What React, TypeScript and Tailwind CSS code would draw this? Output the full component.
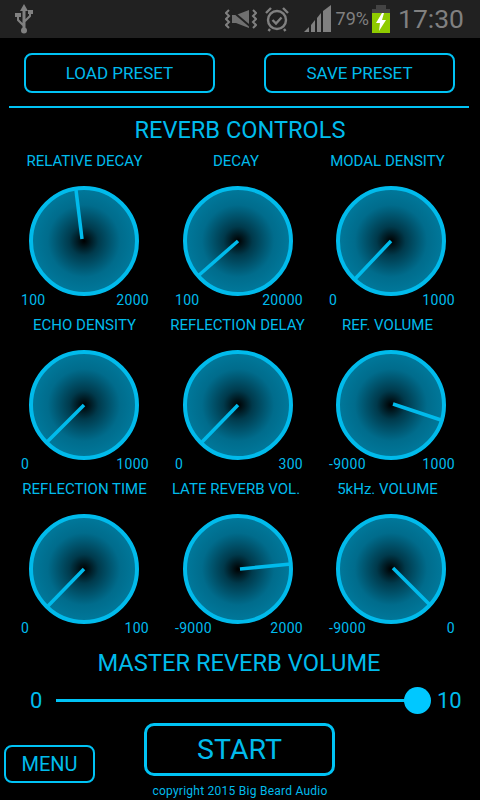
import React from "react";

const knobs = [
  { label: "RELATIVE DECAY", min: "100", max: "2000", x1: 53, y1: 53, x2: 47, y2: 4, shift: "ml-[1px]" },
  { label: "DECAY", min: "100", max: "20000", x1: 55, y1: 55, x2: 15, y2: 90, shift: "mr-[4px]" },
  { label: "MODAL DENSITY", min: "0", max: "1000", x1: 55, y1: 55, x2: 19, y2: 93, shift: "mr-[7px]" },
  { label: "ECHO DENSITY", min: "0", max: "1000", x1: 55, y1: 55, x2: 18, y2: 92, shift: "ml-[1px]" },
  { label: "REFLECTION DELAY", min: "0", max: "300", x1: 55, y1: 55, x2: 19, y2: 92, shift: "mr-[1px]" },
  { label: "REF. VOLUME", min: "-9000", max: "1000", x1: 57, y1: 54, x2: 105, y2: 70, shift: "mr-[7px]" },
  { label: "REFLECTION TIME", min: "0", max: "100", x1: 55, y1: 55, x2: 19, y2: 92, shift: "ml-[1px]" },
  { label: "LATE REVERB VOL.", min: "-9000", max: "2000", x1: 57, y1: 55, x2: 108, y2: 50, shift: "mr-[4px]" },
  { label: "5kHz. VOLUME", min: "-9000", max: "0", x1: 57, y1: 54, x2: 93, y2: 90, shift: "mr-[7px]" },
];

function Knob(k: (typeof knobs)[number]) {
  return (
    <div className="flex flex-col items-center h-[164px]">
      <div className={`h-[20px] leading-[22px] text-[15px] whitespace-nowrap ${k.shift}`}>{k.label}</div>
      <div className="relative w-[110px] h-[110px] mt-[16px] rounded-full border-[4px] border-[#00bbec] bg-[radial-gradient(circle,#000_0%,#003a4c_20%,#006c8c_50%,#007fa3_85%)]">
        <svg className="absolute -left-[4px] -top-[4px]" width="110" height="110" viewBox="0 0 110 110">
          <line x1={k.x1} y1={k.y1} x2={k.x2} y2={k.y2} stroke="#00bbec" strokeWidth="3.5" />
        </svg>
      </div>
      <div className="w-full pl-[14px] pr-[12px] -mt-[5px] h-[18px] leading-[18px] text-[14px] tracking-[0.3px] flex justify-between">
        <span>{k.min}</span>
        <span>{k.max}</span>
      </div>
    </div>
  );
}

function StatusBar() {
  return (
    <div className="h-[38px] bg-[#212121] flex items-center text-[#808080] shrink-0">
      <svg className="ml-[15px]" width="20" height="30" viewBox="0 0 20 30" fill="#808080">
        <path d="M9 0 L5 7 H7.5 V19 L4 15.5 V13 H6 V9 H0 V13 H2 V16.5 L7.5 22 V25 H10.5 V18 L16 12.5 V10 H18 V6 H13 V10 H14 V11.5 L10.5 15 V7 H13 Z" />
        <circle cx="9" cy="26.5" r="3" />
      </svg>
      <div className="ml-auto flex items-center">
        <svg width="32" height="24" viewBox="0 0 32 24" fill="none" stroke="#808080" strokeWidth="2">
          <path d="M4 3 L1 6 L4 9 L1 12 L4 15 L1 18 L4 21" />
          <path d="M28 3 L31 6 L28 9 L31 12 L28 15 L31 18 L28 21" />
          <path d="M7 8 H11 L24 3 V21 L11 16 H7 Z" fill="#707070" stroke="none" />
          <path d="M6 3 L26 20" stroke="#212121" strokeWidth="2" />
        </svg>
        <svg className="ml-[7px]" width="26" height="26" viewBox="0 0 26 26" fill="none" stroke="#808080" strokeWidth="2.4">
          <circle cx="13" cy="14" r="9" />
          <path d="M8.5 14 L12 17.5 L17.5 11.5" />
          <path d="M2 7 L7 2 M19 2 L24 7 M6 23 L4.5 25 M20 23 L21.5 25" />
        </svg>
        <svg className="ml-[14px]" width="29" height="28" viewBox="0 0 29 28" fill="#808080">
          <path d="M0 27 L5 22 V27 Z" />
          <path d="M7 20 L11 15 V27 H7 Z" />
          <path d="M13 13 L17 8 V27 H13 Z" />
          <path d="M19 6 L27 0 V27 H19 Z" />
        </svg>
        <span className="ml-[3px] text-[18px] leading-none">79%</span>
        <div className="ml-[3px] w-[18px] h-[28px] relative flex flex-col items-center">
          <div className="w-[10px] h-[4px] bg-[#444444]" />
          <div className="w-[18px] h-[4px] bg-[#444444]" />
          <div className="w-[18px] h-[20px] bg-[#8fcb00]" />
          <svg className="absolute left-[3px] top-[8px]" width="12" height="18" viewBox="0 0 12 18" fill="#ffffff">
            <path d="M7 0 L1 10 H5 L4 18 L11 7 H7 L9 0 Z" />
          </svg>
        </div>
        <span className="ml-[8px] mr-[16px] text-[26.5px] leading-none">17:30</span>
      </div>
    </div>
  );
}

export default function App() {
  return (
    <div className="w-[480px] h-[800px] overflow-hidden bg-black flex flex-col text-[#00bbec] font-['Roboto',sans-serif]">
      <StatusBar />
      <div className="flex justify-between px-[24px] mr-[1px] mt-[15px]">
        <button className="w-[191px] h-[40px] pt-[1px] border-2 border-[#00c3f5] rounded-[8px] text-[17px]">LOAD PRESET</button>
        <button className="w-[191px] h-[40px] pt-[1px] border-2 border-[#00c3f5] rounded-[8px] text-[17px]">SAVE PRESET</button>
      </div>
      <div className="h-[2px] bg-[#00c3f5] ml-[9px] mr-[11px] mt-[13px]" />
      <div className="text-center text-[23.6px] leading-[30px] mt-[7px]">REVERB CONTROLS</div>
      <div className="grid grid-cols-[154px_154px_152px] px-[7px] mt-[5px]">
        {knobs.map((k) => (
          <Knob key={k.label} {...k} />
        ))}
      </div>
      <div className="text-center text-[23.7px] leading-[30px] mt-[6px] mr-[2px]">MASTER REVERB VOLUME</div>
      <div className="flex items-center h-[30px] mt-[7px] text-[22px]">
        <span className="w-[56px] pl-[30px]">0</span>
        <div className="relative w-[362px] h-[3px] bg-[#00c3f5]">
          <div className="absolute right-[-13px] -top-[12px] w-[27px] h-[27px] rounded-full bg-[#00c8ff]" />
        </div>
        <span className="ml-[19px]">10</span>
      </div>
      <div className="flex items-end px-[4px] mt-[8px]">
        <button className="w-[91px] h-[38px] border-2 border-[#00c3f5] rounded-[8px] text-[20px] mb-[1px]">MENU</button>
        <button className="w-[191px] h-[53px] pt-[1px] ml-[49px] mb-[8px] border-[3px] border-[#00c3f5] rounded-[10px] text-[28.5px]">START</button>
      </div>
      <div className="text-center text-[12px] leading-[14px] tracking-[0.25px] mt-[0px]">copyright 2015 Big Beard Audio</div>
    </div>
  );
}
